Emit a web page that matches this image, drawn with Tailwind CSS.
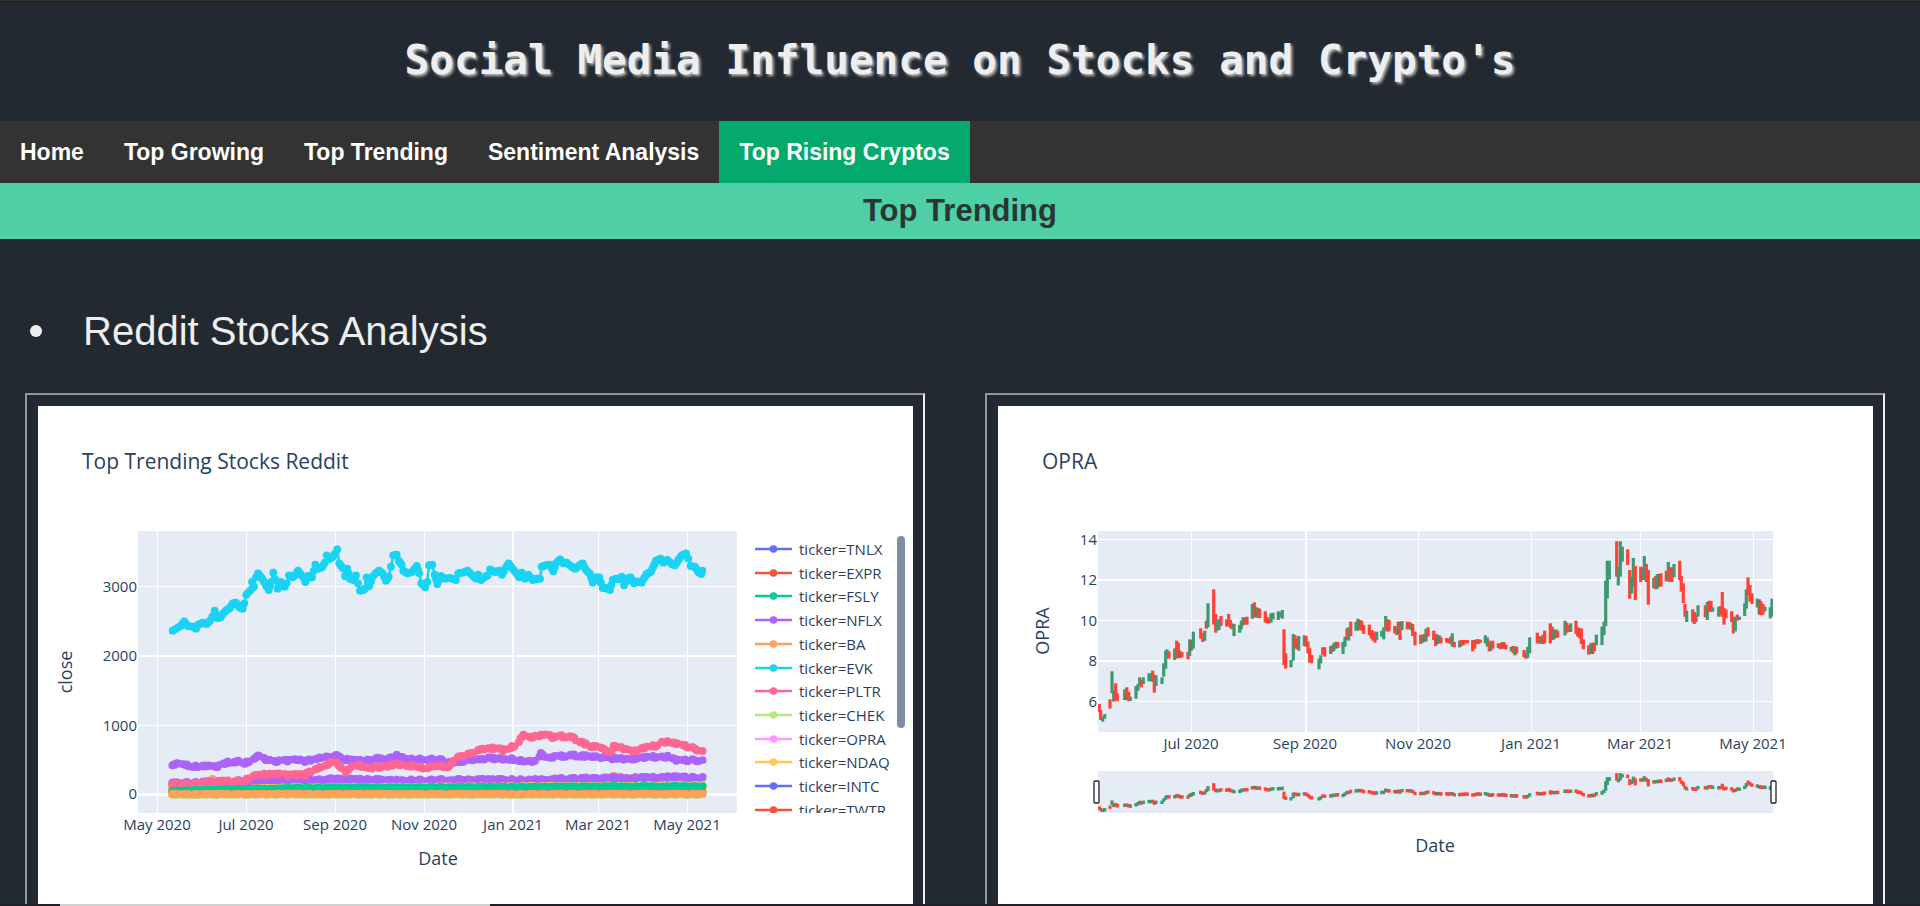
<!DOCTYPE html>
<html lang="en">
<head>
<meta charset="utf-8">
<title>Social Media Influence on Stocks and Crypto's</title>
<script src="https://cdn.jsdelivr.net/npm/@tailwindcss/browser@4"></script>
</head>
<body class="bg-[#222930] font-['Liberation_Sans',Arial,sans-serif] text-[#eeeeee]">
<div class="h-px bg-[#333333]"></div>
<div class="h-[2px] bg-[#222222]"></div>
<header class="flex h-[118px] items-center justify-center pb-1">
  <h1 class="text-center font-['DejaVu_Sans_Mono',monospace] text-[41px] font-bold leading-[48px] [text-shadow:2px_2px_3px_#bbbbbb]">Social Media Influence on Stocks and Crypto's</h1>
</header>
<nav class="flex bg-[#333333] text-[23px] font-bold leading-[26px] text-white">
  <a href="#home" class="px-5 py-[18px]">Home</a>
  <a href="#growing" class="px-5 py-[18px]">Top Growing</a>
  <a href="#trending" class="px-5 py-[18px]">Top Trending</a>
  <a href="#sentiment" class="px-5 py-[18px]">Sentiment Analysis</a>
  <a href="#cryptos" class="bg-[#04aa6d] px-5 py-[18px]">Top Rising Cryptos</a>
</nav>
<h2 class="bg-[#4fcfa6] py-[10px] text-center text-[31px] font-bold leading-9 text-[#293634]">Top Trending</h2>
<main>
  <ul class="pt-[80px] pb-[50px] pl-[30px]">
    <li class="flex items-center gap-[41px] text-[40px] leading-6"><span class="size-3 rounded-full bg-[#eeeeee]"></span><span>Reddit Stocks Analysis</span></li>
  </ul>
  <div class="grid grid-cols-2 gap-[60px] pl-[25px] pr-[35px]">
    <section class="border-2 border-b-0 border-t-[#92979b] border-r-[#eeeeee] border-l-[#92979b] pt-[11px] pr-[10px] pl-[11px]" aria-label="Top Trending Stocks Reddit">
      <svg id="trend" viewBox="0 0 875 498" class="block w-full bg-white fill-[#2a3f5f] font-['Open_Sans',sans-serif] text-[15px]"></svg>
    </section>
    <section class="border-2 border-b-0 border-t-[#92979b] border-r-[#eeeeee] border-l-[#92979b] pt-[11px] pr-[10px] pl-[11px]" aria-label="OPRA">
      <svg id="opra" viewBox="0 0 875 498" class="block w-full bg-white fill-[#2a3f5f] font-['Open_Sans',sans-serif] text-[15px]"></svg>
    </section>
  </div>
</main>
<footer class="h-[2px] bg-[#231f28] pl-[60px]"><div class="h-[2px] w-[430px] bg-[#d0d0d0]"></div></footer>
<script>
const months = ['May 2020', 'Jul 2020', 'Sep 2020', 'Nov 2020', 'Jan 2021', 'Mar 2021', 'May 2021'];
const rect = (x, y, w, h, fill, extra = '') => `<rect x="${x}" y="${y}" width="${w}" height="${h}" fill="${fill}" ${extra}/>`;
const label = (x, y, s, anchor = 'middle', extra = '') => `<text x="${x}" y="${y}" text-anchor="${anchor}" ${extra}>${s}</text>`;
const pairs = s => s.trim().split(/\s+/).map(p => p.split(',').map(Number));

/* Line chart: series points are stored at three units per pixel. */
const lines = [
  ['#FECB52', '125,822 225,788 247,778 270,788 900,788 1010,782 1045,779 1075,782 1300,784 1440,779 1460,777 1550,777 1718,777'],
  ['#FFA15A', '125,800 225,792 247,776 265,792 900,790 1015,779 1080,779 1200,786 1430,782 1450,770 1480,774 1550,775 1718,780'],
  ['#AB63FA', '127,736 140,730 160,730 180,738 230,738 270,738 290,728 320,724 340,730 370,720 384,708 400,716 440,724 500,720 530,724 560,714 590,708 600,716 617,704 640,718 700,724 740,716 770,718 800,706 840,718 900,718 930,720 980,730 1020,718 1060,720 1080,712 1100,718 1140,716 1180,722 1225,724 1230,698 1250,712 1320,706 1360,708 1400,710 1440,716 1520,716 1580,710 1615,710 1640,722 1690,720 1720,723'],
  ['#AB63FA', '127,788 200,787 400,782 600,777 800,781 1000,780 1200,779 1400,775 1550,774 1600,771 1720,773'],
  ['#FF6692', '127,792 200,790 280,785 340,783 370,768 430,760 470,766 525,764 560,744 600,730 615,724 630,740 648,756 665,740 690,736 712,744 760,740 800,732 850,738 880,744 920,738 955,740 975,716 1020,700 1050,690 1090,684 1120,690 1160,674 1180,642 1200,652 1255,640 1270,654 1285,648 1320,650 1350,664 1380,680 1410,678 1440,706 1450,680 1475,684 1520,694 1545,684 1580,676 1600,664 1650,674 1690,684 1720,696'],
  ['#FECB52', '400,804 800,801 1200,799 1720,797'],
  ['#EF553B', '127,818 1720,817'],
  ['#00CC96', '127,812 300,808 600,803 900,802 1300,800 1720,799'],
  ['#B6E880', '127,824 1720,824'],
  ['#FFA15A', '127,822 1720,822'],
  ['#19D3F3', `128,332 145,322 152,318 163,304 173,318 190,320 198,326 205,314 218,308 230,312 240,302 247,290 254,272 262,294 272,292 280,280 290,270 300,264 308,250 318,248 328,262 338,266 343,250 349,224 362,210 366,186 372,200 378,172 384,160 392,170 402,184 410,200 416,210 424,186 430,158 436,178 443,206 452,186 464,200 470,190 477,166 488,172 496,164 504,152 513,164 520,172 526,186 535,168 546,172 556,134 563,146 576,142 584,128 590,106 598,118 608,110 616,100 622,88 628,130 638,144 645,168 652,146 660,176 670,180 678,166 684,190 690,212 700,210 705,206 710,172 718,198 728,170 735,162 747,152 758,160 768,182 776,170 783,140 790,106 800,104 806,122 815,134 820,152 832,160 846,156 860,138 868,160 874,190 886,202 892,186 897,136 907,134 914,164 922,192 932,168 945,176 960,174 978,180 985,160 998,158 1013,152 1025,164 1038,176 1045,164 1053,180 1065,170 1073,166 1080,148 1095,156 1108,152 1116,164 1128,142 1136,130 1146,144 1158,158 1168,172 1175,158 1185,176 1195,164 1208,180 1220,176 1230,176 1235,140 1246,136 1260,134 1270,154 1278,130 1290,118 1300,130 1310,128 1325,140 1336,146 1348,136 1358,130 1368,150 1380,162 1388,188 1398,172 1408,172 1418,204 1428,204 1440,210 1448,180 1458,176 1470,178 1475,170 1482,196 1492,176 1502,172 1512,190 1522,184 1535,188 1540,178 1550,162 1562,156 1570,140 1578,122 1592,116 1600,128 1612,120 1625,132 1635,136 1645,120 1655,106 1668,100 1675,116 1682,138 1695,140 1705,156 1714,162 1717,152`]
];
/* One marker per trading day, nearest-point shape kept for the volatile series. */
function daily(points, wobble, exact) {
  const out = [];
  const put = (x, y) => out.push([(92 + x / 3).toFixed(1), (114 + y / 3).toFixed(1)]);
  if (exact) {
    points.forEach(([x, y], i) => {
      put(x, y);
      const n = points[i + 1];
      if (n && n[0] - x > 7) put((x + n[0]) / 2, (y + n[1]) / 2);
    });
    return out;
  }
  let k = 0;
  for (let d = 0, x = points[0][0]; x <= 1720; d++, x += 4.37) {
    if (d % 7 > 4) continue;
    while (k < points.length - 2 && points[k + 1][0] < x) k++;
    const [x0, y0] = points[k], [x1, y1] = points[k + 1];
    const y = y0 + (y1 - y0) * Math.min(1, (x - x0) / (x1 - x0));
    put(x, y + wobble * Math.sin(d * 2.3 + d * d));
  }
  return out;
}
let s = label(44, 63, 'Top Trending Stocks Reddit', 'start', 'class="text-[21px]"');
s += rect(100, 125, 599, 282, '#E5ECF6');
[119, 208, 297, 386, 475, 560, 649].forEach((x, i) => {
  s += rect(x - (i === 4 ? 1 : 0), 125, i === 4 ? 2 : 1, 282, '#fff') + label(x, 424, months[i]);
});
[[180, 1, '3000'], [249, 2, '2000'], [319, 1, '1000'], [387, 3, '0']].forEach(([y, h, t]) => {
  s += rect(100, y, 599, h, '#fff') + label(99, y + 6, t, 'end');
});
lines.forEach(([c, p], i) => {
  const flat = i > 4 && i < 10;
  const pts = daily(pairs(p), flat ? 1 : 3, i === 10);
  s += `<polyline points="${pts.join(' ')}" fill="none" stroke="${c}" stroke-width="2.5"/>`;
  s += `<g fill="${c}">` + pts.map(([x, y]) => `<circle cx="${x}" cy="${y}" r="3.9"/>`).join('') + '</g>';
});
s += label(400, 459, 'Date', 'middle', 'class="text-[18px]"');
s += '<text transform="translate(34 266) rotate(-90)" text-anchor="middle" class="text-[18px]">close</text>';
s += '<clipPath id="legendClip"><rect x="700" y="125" width="175" height="282"/></clipPath><g clip-path="url(#legendClip)">';
[['TNLX', '#636EFA'], ['EXPR', '#EF553B'], ['FSLY', '#00CC96'], ['NFLX', '#AB63FA'], ['BA', '#FFA15A'], ['EVK', '#19D3F3'], ['PLTR', '#FF6692'], ['CHEK', '#B6E880'], ['OPRA', '#FF97FF'], ['NDAQ', '#FECB52'], ['INTC', '#636EFA'], ['TWTR', '#EF553B']].forEach(([t, c], i) => {
  const y = 143 + Math.round(i * 23.7);
  s += `<path d="M717 ${y}h37" stroke="${c}" stroke-width="2.5"/><circle cx="735.5" cy="${y}" r="3.8" fill="${c}"/>` + label(761, y + 6, 'ticker=' + t, 'start');
});
s += '</g>' + rect(859, 130, 8, 192, '#808BA4', 'rx="4"');
document.getElementById('trend').innerHTML = s;

/* Price bars: x, high, low at three units per pixel, then colour key. */
const early = `238,972,996,r 242,990,1020,r 248,1010,1025,g 254,1002,1016,g 270,958,986,r 276,874,940,g 281,930,965,g 287,910,962,r 292,940,964,r 314,928,960,g 320,922,960,r 326,935,964,r 331,950,963,g 348,918,956,g 354,912,932,g 359,892,915,g 364,900,922,r 370,892,912,g 387,880,904,g 393,880,904,g 398,872,905,r 403,884,938,r 408,886,918,g 426,892,912,g 431,850,890,g 437,812,866,g 441,808,835,g 447,814,836,r 464,805,840,g 470,782,835,r 475,788,834,r 480,812,834,b 486,816,832,r 504,816,838,r 509,778,828,g 514,780,812,b 520,755,806,g 542,745,776,r 548,760,786,r 554,752,782,g 559,722,746,r 564,670,742,g 581,628,734,r 587,702,758,r 592,720,752,g 597,718,750,g 603,708,738,r 620,718,740,r 626,702,738,r 631,720,744,r 636,730,748,r 642,732,768,g 659,735,758,g 664,722,748,g 669,712,736,g 675,712,734,r 681,710,734,r 697,672,716,g 703,667,712,r 709,682,712,b 714,684,714,g 719,686,714,r 736,694,728,r 742,712,730,r 748,715,730,r 753,700,728,g 759,698,718,g 775,694,720,g 781,696,712,g 787,690,716,g 792,748,855,r 797,820,866,r 813,840,862,g 820,762,842,g 825,766,805,r 831,775,808,r 836,768,812,g 853,766,798,g 858,768,800,r 864,785,820,r 869,805,848,r 875,825,850,r 897,836,868,g 902,826,850,g 908,802,825,r 914,802,830,r 932,798,822,g 937,796,816,r 942,788,812,g 948,785,806,g 953,786,804,r 969,786,822,g 975,770,800,g 981,745,780,r 986,742,782,g 992,725,768,r 1008,725,752,g 1014,716,752,g 1019,720,748,b 1025,722,752,r 1031,735,762,r 1048,734,766,r 1054,750,776,r 1059,752,782,r 1065,758,788,r 1070,755,780,g`;
const middle = `65,332,350,g 71,322,358,g 77,288,330,g 82,298,335,r 87,300,334,r 104,318,340,r 110,322,345,g 115,305,340,b 120,305,360,r 126,303,330,g 142,305,328,r 148,306,326,r 153,310,330,g 158,312,348,r 165,335,376,r 182,344,372,r 187,345,368,g 193,342,366,r 198,326,364,g 204,322,350,r 221,332,360,r 227,342,378,r 232,344,372,b 238,346,370,g 243,352,370,r 260,354,368,r 266,356,370,r 272,350,372,r 277,340,380,g 283,366,382,r 299,362,382,g 304,360,378,r 310,360,376,r 316,360,370,r 322,360,370,r 338,360,394,r 344,360,386,r 350,358,372,g 355,358,372,r 361,360,368,r 376,346,370,g 382,352,380,g 388,362,394,r 393,372,392,g 398,362,386,r 415,370,384,r 421,370,388,r 427,366,386,b 432,366,386,r 438,374,388,r 454,380,394,g 460,378,400,r 465,380,406,g 470,380,400,r 492,390,412,r 498,398,416,r 503,380,414,g 509,352,400,g 532,338,370,r 538,348,370,r 543,350,372,g 549,344,372,r 554,332,370,r 571,310,370,r 577,320,360,r 582,330,358,g 588,328,354,g 593,332,352,r 615,302,346,g 620,308,338,r 626,315,336,r 632,310,336,g 648,302,342,r 653,322,350,r 659,325,355,r 664,325,372,r 670,358,388,r 686,376,404,r 692,370,402,g 698,368,402,b 703,368,394,r 709,344,376,g`;
const late = `126,320,375,g 132,305,345,g 137,182,318,g 142,122,235,g 148,122,178,g 170,64,170,r 175,140,196,g 181,64,170,g 187,80,125,g 203,88,135,r 209,150,236,r 215,170,220,g 220,114,200,g 226,138,240,r 242,140,186,r 248,142,180,g 253,108,180,g 259,132,186,r 265,150,254,r 281,174,205,g 287,168,208,r 292,162,206,g 298,162,200,b 303,160,200,r 319,152,184,r 325,126,184,g 330,142,186,r 336,142,186,r 342,132,172,g 359,122,180,r 364,168,215,r 370,190,250,r 375,252,290,r 380,272,306,g 398,268,306,r 403,276,312,r 408,284,306,r 414,256,290,g 436,256,292,r 442,246,300,g 448,242,276,r 453,243,275,r 458,262,275,g 476,260,290,g 482,258,285,r 487,216,290,r 492,264,314,r 498,268,295,r 515,274,306,r 520,290,340,r 526,290,334,g 532,284,302,r 538,290,300,g 554,250,288,g 559,208,266,g 564,172,225,r 570,195,245,r 576,220,252,r 592,236,262,g 598,238,284,b 603,244,286,r 609,252,284,r 615,260,274,g 631,262,295,g 636,236,290,g`;
const bars = [[early, 0, 0], [middle, 1020, 420], [late, 1620, 420]].flatMap(([t, dx, dy]) => t.split(' ').map(b => {
  const [x, hi, lo, c] = b.split(',');
  return [22 + (+x + dx) / 3, (+hi + dy) / 3 - 26, (+lo + dy) / 3 - 26, c];
}));
const tone = { r: '#FF4136', g: '#3D9970', b: '#8B6A4C' };
const drawBars = f => bars.map(([x, hi, lo, c]) => {
  const mid = (f(hi) + f(lo)) / 2, h = Math.max(f(lo) - f(hi), 3.4);
  return rect((x - 1.6).toFixed(1), (mid - h / 2).toFixed(1), 3.2, h.toFixed(1), tone[c]);
}).join('');
s = label(44, 63, 'OPRA', 'start', 'class="text-[21px]"');
s += rect(100, 125, 675, 201, '#E5ECF6');
[193, 307, 420, 533, 642, 755].forEach((x, i) => {
  s += rect(x, 125, i === 1 ? 2 : 1, 201, '#fff') + label(x, 343, months[i + 1]);
});
[133, 173, 214, 254, 295].forEach((y, i) => {
  s += rect(100, y, 675, i % 2 ? 2 : 1, '#fff') + label(99, y + 6, 14 - i * 2, 'end');
});
s += '<clipPath id="plotClip"><rect x="100" y="125" width="675" height="290"/></clipPath><g clip-path="url(#plotClip)">';
s += drawBars(y => y) + rect(100, 365, 675, 42, '#E5ECF6') + drawBars(y => 367 + (y - 135) * 0.21) + '</g>';
[96, 773].forEach(x => { s += `<rect x="${x}" y="375" width="5" height="22" rx="1" fill="#fff" stroke="#222" stroke-width="1.3"/>`; });
s += label(437, 446, 'Date', 'middle', 'class="text-[18px]"');
s += '<text transform="translate(51 225) rotate(-90)" text-anchor="middle" class="text-[18px]">OPRA</text>';
document.getElementById('opra').innerHTML = s;
</script>
</body>
</html>
